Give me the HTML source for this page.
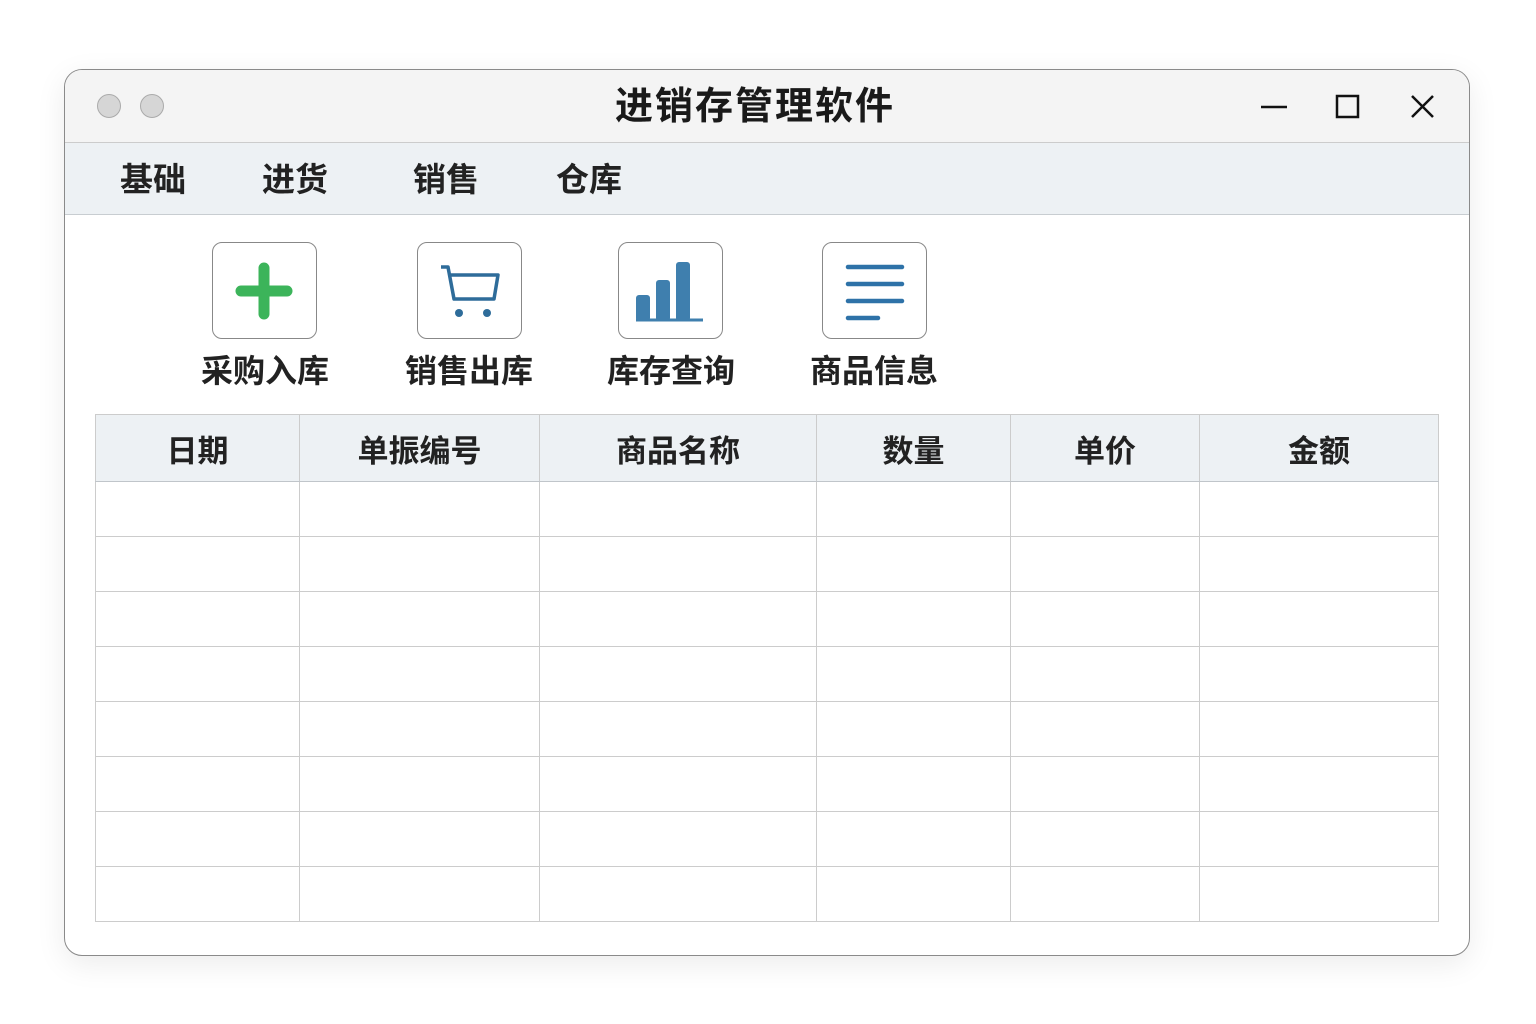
<!DOCTYPE html>
<html><head><meta charset="utf-8"><style>
body{margin:0;width:1536px;height:1024px;background:#fff;font-family:"Liberation Sans","Noto Sans CJK SC",sans-serif;position:relative;overflow:hidden}
.win{position:absolute;left:64px;top:69px;width:1404px;height:885px;border:1.5px solid #8a8a8a;border-radius:18px;background:#fff;overflow:hidden;box-shadow:0 8px 30px rgba(0,0,0,.08)}
.tb{position:absolute;left:0;top:0;width:100%;height:72px;background:#f4f4f4;border-bottom:1.5px solid #ccc}
.menu{position:absolute;left:0;top:73px;width:100%;height:71px;background:#edf1f4;border-bottom:1.5px solid #c8cdd1}
.abs{position:absolute}
.dot{position:absolute;width:22px;height:22px;border-radius:50%;background:#d6d6d6;border:1px solid #aaa;top:24px}
.mi{position:absolute;top:17px;font-size:33px;font-weight:bold;color:#222;line-height:40px}
.ib{position:absolute;top:172px;width:103px;height:95px;border:1.5px solid #888;border-radius:10px;background:#fff}
.lab{position:absolute;top:281px;font-size:32px;font-weight:bold;color:#222;width:200px;text-align:center;line-height:40px}
table{position:absolute;left:30px;top:344px;border-collapse:collapse;border:1.5px solid #999}
td,th{border:1px solid #ccc;height:54px;padding:0}
th{height:66px;background:#edf1f4;font-size:31px;color:#222;font-weight:bold;border-bottom:1.5px solid #c0c5ca}
</style></head><body>
<div class="win">
<div class="tb">
<div class="dot" style="left:32px"></div><div class="dot" style="left:75px"></div>
<div class="abs" style="left:0;width:1380px;text-align:center;top:14px;font-size:38px;font-weight:bold;color:#1a1a1a;line-height:46px;letter-spacing:2px">进销存管理软件</div>
<svg class="abs" style="left:1190px;top:20px" width="190" height="34"><path d="M6 17H32" stroke="#111" stroke-width="2.5"/><path d="M82 6H103V27H82Z" fill="none" stroke="#111" stroke-width="2.5"/><path d="M157 6L178 27M178 6L157 27" stroke="#111" stroke-width="2.5"/></svg>
</div>
<div class="menu">
<div class="mi" style="left:55px">基础</div><div class="mi" style="left:197px">进货</div><div class="mi" style="left:348px">销售</div><div class="mi" style="left:491px">仓库</div>
</div>
<div class="ib" style="left:147px"><svg width="103" height="95"><path d="M51 25V71M28 48H74" stroke="#3cb45a" stroke-width="11" stroke-linecap="round"/></svg></div>
<div class="ib" style="left:352px"><svg width="103" height="95"><path d="M23 24H30L36 56H76L80 32H32" fill="none" stroke="#2e6c9a" stroke-width="3.5" stroke-linejoin="round"/><circle cx="41" cy="70" r="4" fill="#2e6c9a"/><circle cx="69" cy="70" r="4" fill="#2e6c9a"/></svg></div>
<div class="ib" style="left:553px"><svg width="103" height="95"><rect x="17" y="52" width="14" height="26" rx="3" fill="#3f7fae"/><rect x="37" y="37" width="14" height="41" rx="3" fill="#3f7fae"/><rect x="57" y="19" width="14" height="59" rx="3" fill="#3f7fae"/><path d="M17 77H84" stroke="#3f7fae" stroke-width="3"/></svg></div>
<div class="ib" style="left:757px"><svg width="103" height="95"><path d="M25 24H79M25 41H79M25 58H79M25 75H55" stroke="#2e72a8" stroke-width="4.5" stroke-linecap="round"/></svg></div>
<div class="lab" style="left:100px">采购入库</div><div class="lab" style="left:304px">销售出库</div><div class="lab" style="left:506px">库存查询</div><div class="lab" style="left:709px">商品信息</div>
<table>
<tr><th style="width:203px">日期</th><th style="width:239px">单振编号</th><th style="width:276px">商品名称</th><th style="width:193px">数量</th><th style="width:188px">单价</th><th style="width:238px">金额</th></tr>
<tr><td></td><td></td><td></td><td></td><td></td><td></td></tr>
<tr><td></td><td></td><td></td><td></td><td></td><td></td></tr>
<tr><td></td><td></td><td></td><td></td><td></td><td></td></tr>
<tr><td></td><td></td><td></td><td></td><td></td><td></td></tr>
<tr><td></td><td></td><td></td><td></td><td></td><td></td></tr>
<tr><td></td><td></td><td></td><td></td><td></td><td></td></tr>
<tr><td></td><td></td><td></td><td></td><td></td><td></td></tr>
<tr><td></td><td></td><td></td><td></td><td></td><td></td></tr>
</table>
</div>
</body></html>
